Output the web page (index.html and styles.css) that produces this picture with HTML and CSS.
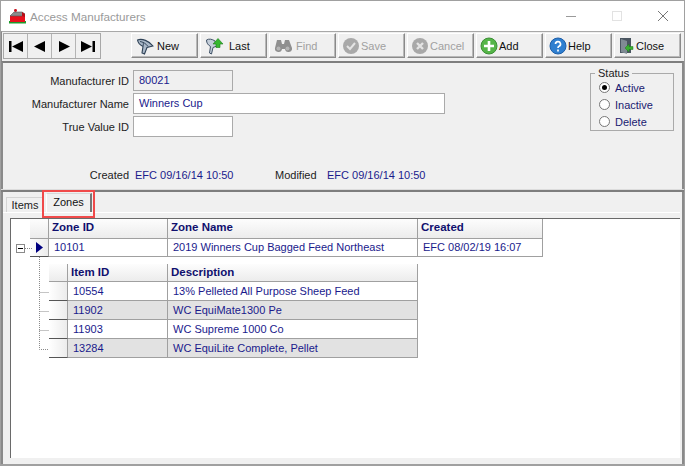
FILE: index.html
```html
<!DOCTYPE html>
<html lang="en">
<head>
<meta charset="utf-8">
<title>Access Manufacturers</title>
<link rel="stylesheet" href="styles.css">
</head>
<body>
<div class="window">
  <header class="titlebar">
    <svg class="app-icon" width="17" height="16" viewBox="0 0 17 16"><path d="M0 13h17v2.500H0z" fill="#1e9a2c"/><path d="M4 6h12v8H1V8z" fill="#e8101c"/><path d="M1 8l4-4h8l3 2-3 2z" fill="#8b8b8b" stroke="#555" stroke-width=".6"/><path d="M13 4l3 2v3l-3-1z" fill="#b80c16"/><rect x="5" y="1" width="3" height="3" rx="1.400" fill="#c8121e"/></svg>
    <span class="title">Access Manufacturers</span>
    <div class="winctl">
      <svg width="12" height="12" viewBox="0 0 12 12"><path d="M1 6.500h10" stroke="#9a9a9a"/></svg>
      <svg width="12" height="12" viewBox="0 0 12 12"><rect x="1.500" y="1.500" width="9" height="9" fill="none" stroke="#e2e2e2"/></svg>
      <svg width="12" height="12" viewBox="0 0 12 12"><path d="M1 1l10 10M11 1L1 11" stroke="#777" fill="none"/></svg>
    </div>
  </header>

  <div class="toolbar">
    <div class="nav">
      <button class="navbtn"><svg width="16" height="11" viewBox="0 0 16 11"><path d="M1 0h2.500v11H1zM15 0v11L4 5.500z"/></svg></button>
      <button class="navbtn"><svg width="12" height="11" viewBox="0 0 12 11"><path d="M11 0v11L0 5.500z"/></svg></button>
      <button class="navbtn"><svg width="12" height="11" viewBox="0 0 12 11"><path d="M1 0v11l11-5.500z"/></svg></button>
      <button class="navbtn"><svg width="16" height="11" viewBox="0 0 16 11"><path d="M12.500 0H15v11h-2.500zM1 0v11l11-5.500z"/></svg></button>
    </div>
    <div class="actions">
      <button class="btn gap-new"><svg class="ico" width="20" height="18" viewBox="0 0 20 18"><path d="M1.500 3C6 1 13 4 17 9l-6 1.500L8.500 17l-2.500-1 1-6.500C4 8 2 6 1.500 3z" fill="#aab8c8" stroke="#2f4257" stroke-width="1.100"/><path d="M4 4.500c3 .5 6 2 8 5M7 9c.5-1.500.5-3 0-4" fill="none" stroke="#35485c"/></svg><span>New</span></button>
      <button class="btn gap-last"><svg class="ico" width="20" height="18" viewBox="0 0 20 18"><path d="M1.500 3C4 1.500 7 2 10 4l2 5-4 1.500L6.500 17 4.500 16l1-6.500C3 8 1.500 6 1.500 3z" fill="#c4ceda" stroke="#3f5166"/><path d="M13 1.500l5 5.500h-3v3.500h-4V7H8z" fill="#35b82f" stroke="#1c7a1c" stroke-width=".6"/></svg><span>Last</span></button>
      <button class="btn off gap-find"><svg class="ico" width="18" height="14" viewBox="0 0 18 14"><path d="M3 1h4l1 4h2l1-4h4l3 8a3.500 3.500 0 0 1-7 1H8a3.500 3.500 0 0 1-7-1z" fill="#8f8f8f"/><circle cx="4.500" cy="9.500" r="2" fill="#b5b5b5"/><circle cx="13.500" cy="9.500" r="2" fill="#b5b5b5"/></svg><span>Find</span></button>
      <button class="btn off tight"><svg class="ico" width="18" height="18" viewBox="0 0 18 18"><circle cx="9" cy="9" r="8" fill="#a9a9a9"/><path d="M5 9l3 3 5-6" fill="none" stroke="#e4e4e4" stroke-width="2"/></svg><span>Save</span></button>
      <button class="btn off tight"><svg class="ico" width="18" height="18" viewBox="0 0 18 18"><circle cx="9" cy="9" r="8" fill="#a9a9a9"/><path d="M6 6l6 6M12 6l-6 6" stroke="#e4e4e4" stroke-width="2.400"/></svg><span>Cancel</span></button>
      <button class="btn tight"><svg class="ico" width="18" height="18" viewBox="0 0 18 18"><circle cx="9" cy="9" r="8" fill="#55b548" stroke="#3b8f35"/><path d="M9 4v10M4 9h10" stroke="#fff" stroke-width="2.600"/></svg><span>Add</span></button>
      <button class="btn tight"><svg class="ico" width="18" height="18" viewBox="0 0 18 18"><circle cx="9" cy="9" r="8" fill="#2f7fd0" stroke="#1d5ea8"/><path d="M6.500 7a2.500 2.400 0 1 1 3.500 2.300c-.8.400-1 .8-1 1.700M9 12.500v2" fill="none" stroke="#fff" stroke-width="1.700"/></svg><span>Help</span></button>
      <button class="btn tight"><svg class="ico" width="17" height="18" viewBox="0 0 17 18"><path d="M2 1h11v15H2z" fill="#4a5560"/><path d="M3 2l6 2v13l-6-2z" fill="#7f8b94"/><path d="M7 11l4-4v2.500h4v3h-4V15z" fill="#38b02f" stroke="#1c7a1c" stroke-width=".5"/></svg><span>Close</span></button>
    </div>
  </div>

  <section class="panel">
    <div class="form-area">
      <div class="form">
        <label class="lbl">Manufacturer ID</label><div class="field readonly">80021</div>
        <label class="lbl">Manufacturer Name</label><div class="field wide">Winners Cup</div>
        <label class="lbl">True Value ID</label><div class="field"></div>
      </div>
      <fieldset class="status">
        <legend>Status</legend>
        <div class="radio"><span class="dot on"></span>Active</div>
        <div class="radio"><span class="dot"></span>Inactive</div>
        <div class="radio"><span class="dot"></span>Delete</div>
      </fieldset>
    </div>
    <div class="audit">
      <span class="lbl">Created</span><span class="val created">EFC 09/16/14 10:50</span>
      <span class="mod">Modified</span><span class="val">EFC 09/16/14 10:50</span>
    </div>
  </section>

  <div class="splitter"></div>

  <section class="tabs">
    <div class="tabstrip">
      <div class="tab">Items</div>
      <div class="tab active">Zones</div>
    </div>
    <div class="highlight"></div>
    <div class="page">
      <div class="grid">
        <div class="row zone head">
          <div class="rowhead"></div><div class="cell">Zone ID</div><div class="cell">Zone Name</div><div class="cell">Created</div>
        </div>
        <div class="row zone">
          <div class="rowhead"><svg width="7" height="11" viewBox="0 0 7 11"><path d="M0 0v11l7-5.500z" fill="#000080"/></svg></div>
          <div class="cell">10101</div><div class="cell">2019 Winners Cup Bagged Feed Northeast</div><div class="cell">EFC 08/02/19 16:07</div>
        </div>
        <div class="expander"><span></span></div>
        <svg class="branch" width="8" height="1" viewBox="0 0 8 1"><path d="M0 .5h8" stroke="#8a8a8a" stroke-dasharray="1 1"/></svg>
        <svg class="tree" width="11" height="93" viewBox="0 0 11 93"><path d="M.5 0v92.500H10M.5 35.500H10M.5 54.500H10M.5 73.500H10" fill="none" stroke="#8a8a8a" stroke-dasharray="1 1"/></svg>
        <div class="subgrid">
          <div class="row item head"><div class="rowhead"></div><div class="cell">Item ID</div><div class="cell">Description</div></div>
          <div class="row item"><div class="rowhead"></div><div class="cell">10554</div><div class="cell">13% Pelleted All Purpose Sheep Feed</div></div>
          <div class="row item alt"><div class="rowhead"></div><div class="cell">11902</div><div class="cell">WC EquiMate1300 Pe</div></div>
          <div class="row item"><div class="rowhead"></div><div class="cell">11903</div><div class="cell">WC Supreme 1000 Co</div></div>
          <div class="row item alt"><div class="rowhead"></div><div class="cell">13284</div><div class="cell">WC EquiLite Complete, Pellet</div></div>
        </div>
      </div>
    </div>
  </section>
</div>
</body>
</html>
```
FILE: styles.css
```css
* { box-sizing: border-box; }
html, body { margin: 0; height: 100%; }
body { width: 685px; height: 466px; overflow: hidden; background: #fff; font: 11px "Liberation Sans", Arial, sans-serif; color: #1a1a2e; }
.window { width: 685px; height: 466px; display: flex; flex-direction: column; border: 1px solid #a0a0a0; border-bottom-width: 2px; background: #f0f0f0; }

.titlebar { height: 30px; flex: none; background: #fff; display: flex; align-items: center; padding-left: 8px; }
.app-icon { margin-right: 4px; margin-top: -1px; }
.title { color: #9a9a9a; font-size: 11.7px; }
.winctl { margin-left: auto; display: flex; gap: 34px; padding-right: 15px; }

.toolbar { height: 30px; flex: none; display: flex; align-items: flex-start; background: #f0f0f0; padding: 1px 0 0 1px; border-top: 1px solid #a8a8a8; border-left: 1px solid #8a8a8a; }
.nav { display: flex; height: 26px; border: 1px solid #a8a8a8; width: 98px; background: #f0f0f0; }
.navbtn { width: 24px; height: 24px; padding: 0; border: 0; border-right: 1px solid #b4b4b4; background: #f0f0f0; display: flex; align-items: center; justify-content: center; }
.navbtn svg { fill: #000; }
.navbtn:last-child { border-right: 0; }
.actions { display: flex; gap: 2px; margin-left: 30px; }
.btn { width: 67px; height: 25px; padding: 0 0 0 4px; display: flex; align-items: center; background: #f0f0f0; border: 1px solid; border-color: #fff #8a8a8a #8a8a8a #fff; font: inherit; color: #111; box-shadow: inset -1px -1px 0 #b8b8b8; }
.gap-new { gap: 1px; }
.gap-last { gap: 4px; }
.gap-find { gap: 4px; }
.btn.tight { gap: 1px; padding-left: 3px; }
.btn.off { color: #a0a0a0; }
.ico { flex: none; }

.panel { height: 128px; flex: none; display: flex; flex-direction: column; border-top: 2px solid #7e7e7e; border-left: 2px solid #8a8a8a; border-right: 2px solid #8a8a8a; background: #f0f0f0; }
.form-area { display: flex; justify-content: space-between; height: 98px; }
.form { display: grid; grid-template-columns: 126px auto; grid-auto-rows: 21px; row-gap: 2px; column-gap: 4px; padding-top: 7px; align-content: start; justify-items: start; align-items: center; }
.lbl { justify-self: end; color: #222; }
.field { width: 100px; height: 21px; border: 1px solid #aaa; background: #fff; color: #1a1a8c; padding: 0 5px; line-height: 19px; }
.field.wide { width: 312px; }
.field.readonly { background: #f0f0f0; }
.status { margin: 5px 8px 0 0; padding: 0 0 0 8px; width: 84px; height: 63px; border: 1px solid #aaa; }
.status legend { padding: 0 3px; margin-left: -4px; line-height: 11px; color: #222; }
.radio { display: flex; align-items: center; gap: 5px; height: 17px; color: #1a1a70; }
.dot { width: 11px; height: 11px; border-radius: 50%; background: #fff; border: 1px solid #777; display: flex; align-items: center; justify-content: center; }
.dot.on::after { content: ""; width: 5px; height: 5px; border-radius: 50%; background: #000; }
.audit { display: flex; align-items: center; height: 18px; margin-top: 5px; }
.audit .lbl { width: 126px; text-align: right; }
.val { color: #1a1a8c; }
.created { margin-left: 6px; width: 140px; }
.mod { color: #222; width: 52px; }

.splitter { height: 3px; flex: none; background: #f0f0f0; border-top: 1px solid #dcdcdc; border-bottom: 2px solid #7e7e7e; }

.tabs { flex: 1; position: relative; display: flex; flex-direction: column; padding-bottom: 6px; border-left: 2px solid #8a8a8a; border-right: 2px solid #8a8a8a; min-height: 0; }
.tabstrip { height: 20px; flex: none; display: flex; align-items: flex-end; padding-left: 3px; gap: 2px; }
.tab { width: 38px; height: 15px; text-align: center; background: #f0f0f0; border: 1px solid #d4d4d4; border-bottom: 0; color: #222; line-height: 15px; }
.tab.active { width: 46px; height: 19px; border-right: 2px solid #777; border-top: 1px solid #d8d8d8; border-left: 1px solid #fff; line-height: 16px; color: #111; }
.highlight { position: absolute; left: 39px; top: -2px; width: 53px; height: 28px; border: 2px solid #f04a4a; pointer-events: none; }
.page { flex: 1; margin: 0 2px 0 0; padding: 5px 0 0 7px; background: #f0f0f0; border-top: 1px solid #fff; min-height: 0; display: flex; }
.grid { flex: 1; position: relative; background: #fff; border-top: 1px solid #6a6a6a; border-left: 1px solid #6a6a6a; padding-left: 19px; }

.row { display: grid; color: #1a1a8c; }
.zone { grid-template-columns: 19px 119px 250px 125px; height: 18px; width: 513px; }
.zone.head { height: 20px; }
.item { grid-template-columns: 19px 100px 250px; height: 19px; width: 369px; }
.cell { padding-left: 5px; border-right: 1px solid #a0a0a0; border-bottom: 1px solid #a0a0a0; line-height: 17px; white-space: nowrap; overflow: hidden; }
.item .cell { line-height: 19px; }
.rowhead { background: linear-gradient(90deg, #fff, #ececec); border-right: 1px solid #a0a0a0; border-bottom: 1px solid #555; display: flex; align-items: center; justify-content: center; }
.head .cell, .item.head .cell { padding-left: 3px; font-size: 11.5px; font-weight: 700; line-height: 17px; color: #10106e; background: linear-gradient(#fdfdfd, #ececec); }
.head .rowhead { border-bottom-color: #a0a0a0; background: linear-gradient(#fdfdfd, #ececec); }
.alt .cell { background: #e2e2e2; }
.subgrid { margin: 7px 0 0 19px; }
.item.head { height: 18px; }

.expander { position: absolute; left: 5px; top: 25px; width: 9px; height: 9px; border: 1px solid #8a8a8a; background: #fff; display: flex; align-items: center; justify-content: center; }
.expander span { width: 5px; height: 1px; background: #000; }
.branch { position: absolute; left: 14px; top: 29px; }
.tree { position: absolute; left: 28px; top: 38px; }
```
